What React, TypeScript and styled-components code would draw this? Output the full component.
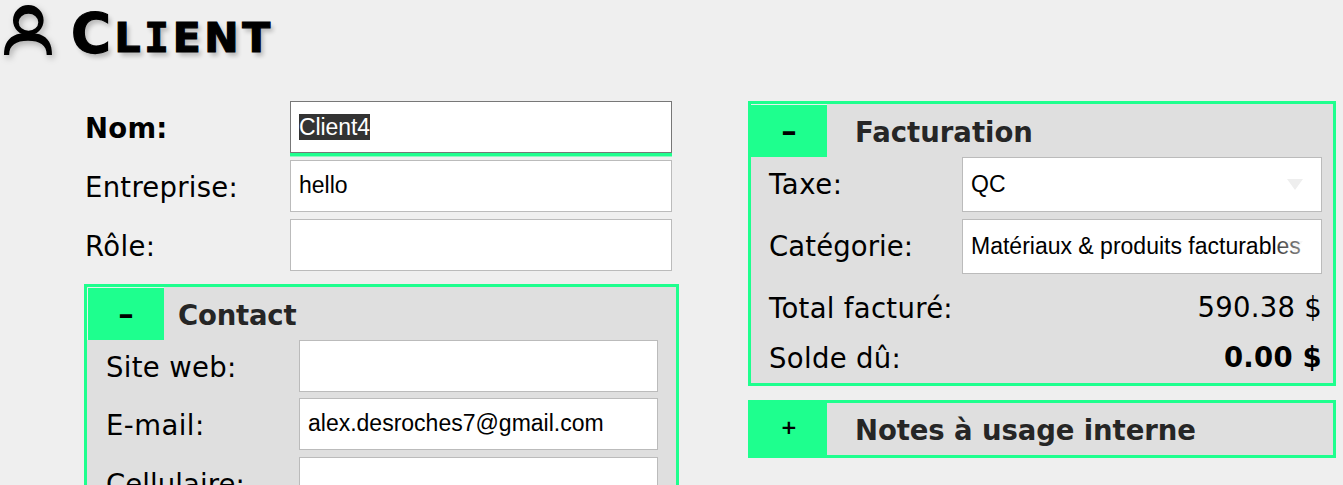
import React from "react";
import styled, { createGlobalStyle } from "styled-components";

const GREEN = "#1eff8e";

const GlobalStyle = createGlobalStyle`
  * { box-sizing: border-box; }
  html, body { margin: 0; height: 485px; overflow: hidden; background: #efefef; }
  body { font-family: "DejaVu Sans", sans-serif; font-size: 27.5px; color: #000; }
`;

const Page = styled.div`
  height: 485px;
  overflow: hidden;
`;

const Header = styled.header`
  display: flex;
  height: 101px;
  padding-left: 4px;
`;

const PersonIcon = styled.svg`
  width: 50px;
  height: 52px;
  margin-top: 5px;
  overflow: visible;
  filter: drop-shadow(2px 3px 3px rgba(0, 0, 0, 0.28));
`;

const Title = styled.h1`
  margin: 0 0 0 17px;
  font-size: 59px;
  line-height: 64px;
  font-weight: bold;
  font-variant: small-caps;
  white-space: nowrap;
  letter-spacing: 3.6px;
  -webkit-text-stroke: 1.2px #000;
  text-shadow: 3px 4px 4px rgba(0, 0, 0, 0.22);
  &::first-letter { font-size: 54.5px; }
`;

const SlabLetter = styled.span`
  font-family: "DejaVu Sans Mono", monospace;
`;

const Columns = styled.main`
  display: flex;
  align-items: flex-start;
  padding-left: 84px;
`;

const LeftColumn = styled.section`
  width: 595px;
  margin-right: 69px;
`;

const RightColumn = styled.section`
  width: 588px;
`;

const Row = styled.div<{ $h?: number; $gap?: number }>`
  display: flex;
  height: ${(p) => p.$h ?? 52}px;
  margin-bottom: ${(p) => p.$gap ?? 7}px;
`;

const Label = styled.label<{ $w: number; $bold?: boolean; $ls?: number; $pad?: number }>`
  flex: none;
  width: ${(p) => p.$w}px;
  padding-left: ${(p) => p.$pad ?? 0}px;
  line-height: 54px;
  white-space: nowrap;
  font-weight: ${(p) => (p.$bold ? "bold" : "normal")};
  letter-spacing: ${(p) => p.$ls ?? 0}px;
`;

const Field = styled.div<{ $w: number; $active?: boolean }>`
  position: relative;
  isolation: isolate;
  width: ${(p) => p.$w}px;
  height: 100%;
  display: flex;
  align-items: center;
  padding: 0 0 ${(p) => (p.$active ? 0 : 2)}px 8px;
  background: #fff;
  border: 1px solid ${(p) => (p.$active ? "#777" : "#bbb")};
  box-shadow: ${(p) => (p.$active ? `0 3px 0 ${GREEN}, 0 4px 0 #8ff7c3` : "none")};
  font-family: "Liberation Sans", Arial, sans-serif;
  font-size: 23px;
  line-height: 26px;
  white-space: nowrap;
`;

const Selection = styled.span`
  background: #333;
  color: #fff;
  letter-spacing: -0.1px;
`;

const Arrow = styled.i`
  position: absolute;
  z-index: -1;
  right: 18px;
  top: 21px;
  border: 8px solid transparent;
  border-top: 11px solid #eee;
  border-bottom: 0;
`;

const Fade = styled.i`
  position: absolute;
  top: 0;
  right: 0;
  width: 44px;
  height: 100%;
  background: linear-gradient(to right, rgba(255, 255, 255, 0.25), rgba(255, 255, 255, 0.55) 60%, #fff);
`;

const Panel = styled.section<{ $top?: number; $h?: number }>`
  margin-top: ${(p) => p.$top ?? 0}px;
  height: ${(p) => (p.$h ? `${p.$h}px` : "auto")};
  border: 3px solid ${GREEN};
  background: #dfdfdf;
`;

const PanelHead = styled.div<{ $line?: boolean; $inset?: boolean }>`
  display: flex;
  height: ${(p) => (p.$line ? 53 : 52)}px;
  padding-top: ${(p) => (p.$line ? 1 : 0)}px;
  padding-left: ${(p) => (p.$inset ? 1 : 0)}px;
`;

const Toggle = styled.button<{ $line?: boolean; $inset?: boolean }>`
  width: 76px;
  height: 52px;
  padding: 0 0 ${(p) => (p.$line ? 2 : 4)}px;
  border: 0;
  background: ${GREEN};
  box-shadow: ${(p) => (p.$line ? `0 -1px 0 #e8f0ec${p.$inset ? ", -1px 0 0 #e8f0ec" : ""}` : "none")};
  display: flex;
  align-items: center;
  justify-content: center;
  font-family: "DejaVu Sans", sans-serif;
  font-size: ${(p) => (p.$line ? 31 : 20)}px;
  line-height: 30px;
  font-weight: bold;
  color: #000;
`;

const PanelTitle = styled.h2<{ $left: number; $ls?: number }>`
  margin: 0 0 0 ${(p) => p.$left}px;
  font-size: 27.5px;
  line-height: 55px;
  font-weight: bold;
  color: #262626;
  white-space: nowrap;
  letter-spacing: ${(p) => p.$ls ?? 0}px;
`;

const PanelBody = styled.div`
  padding-left: 18px;
`;

const Amount = styled.span<{ $bold?: boolean }>`
  width: 360px;
  text-align: right;
  line-height: 52px;
  font-weight: ${(p) => (p.$bold ? "bold" : "normal")};
  letter-spacing: 0.25px;
`;

export default function App() {
  return (
    <Page>
      <GlobalStyle />
      <Header>
        <PersonIcon viewBox="0 0 50 52">
          <path
            fillRule="evenodd"
            d="M24.3 0a15.3 15.2 0 1 1 0 30.4a15.3 15.2 0 1 1 0-30.4zM24.5 8.7a9.8 8.5 0 1 0 0 17a9.8 8.5 0 1 0 0-17z"
          />
          <path d="M0 50C0 39 4 32.5 13 29.2Q24 26.8 35.5 29.2C44.5 32.5 48 39 48 50H42.7C42.7 40 36 35.7 24 35.7S5.2 40 5.2 50Z" />
        </PersonIcon>
        <Title>
          Cl<SlabLetter>i</SlabLetter>ent
        </Title>
      </Header>
      <Columns>
        <LeftColumn>
          <Row>
            <Label $w={206} $pad={1} $bold $ls={0.25}>Nom:</Label>
            <Field $w={382} $active><Selection>Client4</Selection></Field>
          </Row>
          <Row>
            <Label $w={206} $pad={1} $ls={0.27}>Entreprise:</Label>
            <Field $w={382}>hello</Field>
          </Row>
          <Row $gap={13}>
            <Label $w={206} $pad={1} $ls={0.4}>Rôle:</Label>
            <Field $w={382} />
          </Row>
          <Panel>
            <PanelHead $line $inset>
              <Toggle $line $inset>–</Toggle>
              <PanelTitle $left={14} $ls={-0.2}>Contact</PanelTitle>
            </PanelHead>
            <PanelBody>
              <Row $gap={6}>
                <Label $w={194} $pad={1} $ls={0.33}>Site web:</Label>
                <Field $w={359} />
              </Row>
              <Row>
                <Label $w={194} $pad={1} $ls={0.45}>E-mail:</Label>
                <Field $w={359}>alex.desroches7@gmail.com</Field>
              </Row>
              <Row>
                <Label $w={194} $pad={1} $ls={0.1}>Cellulaire:</Label>
                <Field $w={359} />
              </Row>
            </PanelBody>
          </Panel>
        </LeftColumn>
        <RightColumn>
          <Panel $h={285}>
            <PanelHead $line>
              <Toggle $line>–</Toggle>
              <PanelTitle $left={28}>Facturation</PanelTitle>
            </PanelHead>
            <PanelBody>
              <Row $h={55}>
                <Label $w={193} $ls={0.6}>Taxe:</Label>
                <Field $w={360}>QC<Arrow /></Field>
              </Row>
              <Row $h={55}>
                <Label $w={193} $ls={0.1}>Catégorie:</Label>
                <Field $w={360}><Arrow />Matériaux &amp; produits facturables<Fade /></Field>
              </Row>
              <Row $h={50} $gap={0}>
                <Label $w={193} $ls={0.3}>Total facturé:</Label>
                <Amount>590.38 $</Amount>
              </Row>
              <Row $h={50} $gap={0}>
                <Label $w={193} $ls={0.33}>Solde dû:</Label>
                <Amount $bold>0.00 $</Amount>
              </Row>
            </PanelBody>
          </Panel>
          <Panel $top={14} $h={58}>
            <PanelHead>
              <Toggle>+</Toggle>
              <PanelTitle $left={28} $ls={-0.1}>Notes à usage interne</PanelTitle>
            </PanelHead>
          </Panel>
        </RightColumn>
      </Columns>
    </Page>
  );
}
